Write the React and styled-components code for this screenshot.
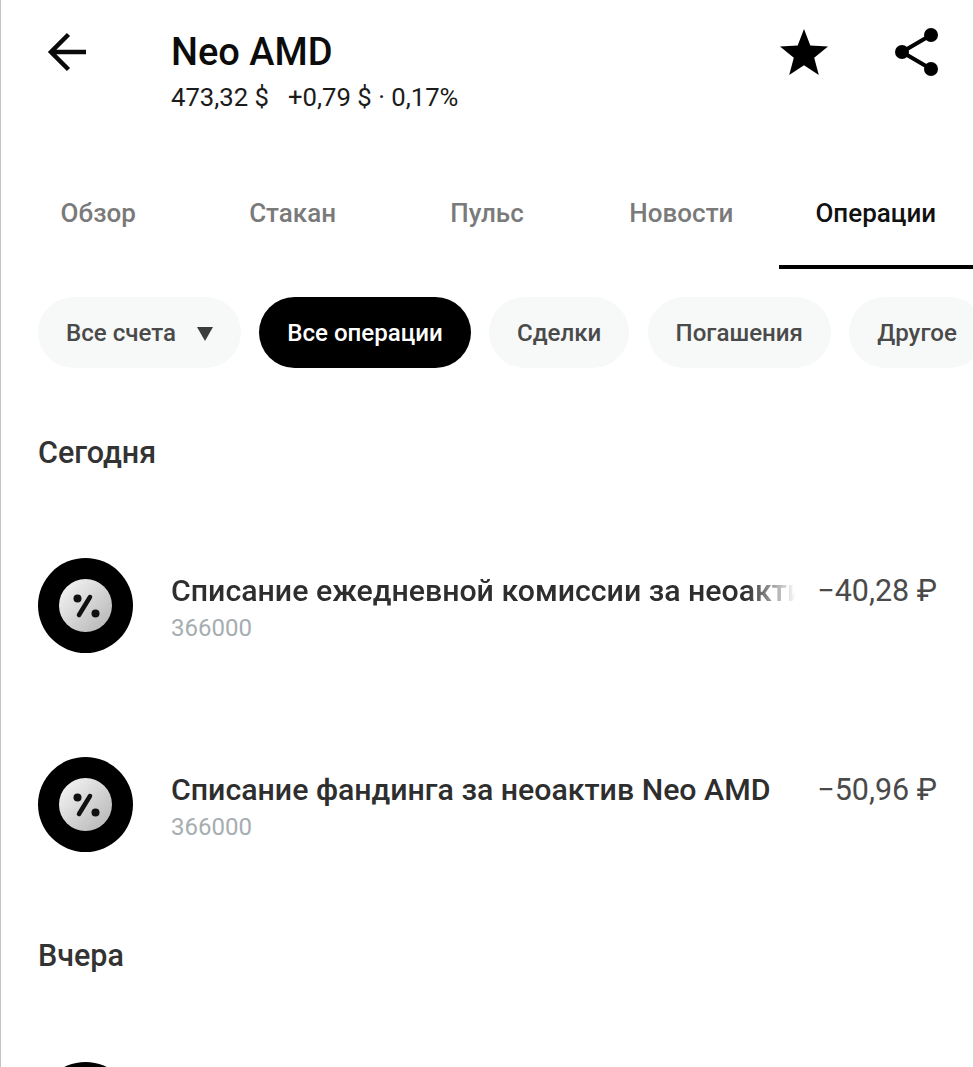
import React from "react";
import styled, { createGlobalStyle } from "styled-components";

const Global = createGlobalStyle`
  html, body { margin: 0; padding: 0; background: #fff; }
  body { font-family: Roboto, "Liberation Sans", sans-serif; }
`;

const Screen = styled.div`
  width: 974px;
  height: 1067px;
  box-sizing: border-box;
  overflow: hidden;
  background: #fff;
  border-left: 1px solid #c4c4c4;
  border-right: 1px solid #d4d4d4;
`;

const Header = styled.header`
  display: flex;
  align-items: flex-start;
  height: 179px;
  padding: 25px 34px 0 46px;
  box-sizing: border-box;
`;

const IconButton = styled.button`
  border: 0;
  padding: 0;
  background: none;
  display: flex;
  width: ${(p) => p.$w}px;
  height: 54px;
  margin-left: ${(p) => p.$ml || 0}px;
  align-items: center;
  justify-content: center;
`;

const TitleBlock = styled.div`
  flex: 1;
  margin-left: 84px;
`;

const Title = styled.h1`
  margin: 0;
  font-size: 38px;
  line-height: 54px;
  font-weight: 500;
  color: #0c0c0c;
`;

const Quote = styled.div`
  display: flex;
  gap: 19px;
  font-size: 25.7px;
  line-height: 37px;
  color: #1c1c1c;
`;

const Tabs = styled.nav`
  display: grid;
  grid-template-columns: repeat(5, 1fr);
  height: 90px;
`;

const Tab = styled.div`
  display: flex;
  align-items: center;
  justify-content: center;
  padding-bottom: 18px;
  box-sizing: border-box;
  font-size: 26px;
  font-weight: 500;
  color: ${(p) => (p.$active ? "#111" : "#7a7a7a")};
  border-bottom: 4px solid ${(p) => (p.$active ? "#000" : "transparent")};
`;

const Chips = styled.div`
  display: flex;
  gap: 18.2px;
  padding: 28px 0 0 37px;
  white-space: nowrap;
`;

const Chip = styled.div`
  display: flex;
  align-items: center;
  gap: 21px;
  flex-shrink: 0;
  height: 71px;
  padding: 0 28px;
  border-radius: 36px;
  font-size: 24.1px;
  font-weight: 500;
  background: ${(p) => (p.$active ? "#000" : "#f7f9f8")};
  color: ${(p) => (p.$active ? "#fff" : "#4a4a4a")};
`;

const Caret = styled.span`
  width: 0;
  height: 0;
  margin-top: 3px;
  border-left: 8px solid transparent;
  border-right: 8px solid transparent;
  border-top: 14px solid #3c3c3c;
`;

const SectionTitle = styled.h2`
  margin: ${(p) => p.$top}px 0 0 37px;
  font-size: 30.5px;
  line-height: 40px;
  font-weight: 500;
  color: #333;
`;

const Row = styled.div`
  display: flex;
  align-items: center;
  height: 95px;
  margin-top: ${(p) => p.$top}px;
  padding: 0 36px 0 37px;
`;

const Avatar = styled.div`
  width: 95px;
  height: 95px;
  flex-shrink: 0;
  border-radius: 50%;
  background: #000;
  display: flex;
  align-items: center;
  justify-content: center;
`;

const Coin = styled.div`
  width: 53px;
  height: 53px;
  border-radius: 50%;
  background: linear-gradient(135deg, #f2f2f2 10%, #b9b9b9 90%);
  display: flex;
  align-items: center;
  justify-content: center;
`;

const RowText = styled.div`
  width: 625px;
  margin-left: 38px;
  margin-top: 4px;
  flex-shrink: 0;
`;

const RowTitle = styled.div`
  font-size: 30.3px;
  line-height: 40px;
  font-weight: 500;
  color: #2e2e2e;
  white-space: nowrap;
  overflow: hidden;
  ${(p) =>
    p.$fade &&
    "-webkit-mask-image: linear-gradient(90deg, #000 92%, transparent 100%); mask-image: linear-gradient(90deg, #000 92%, transparent 100%);"}
`;

const RowSub = styled.div`
  font-size: 24px;
  line-height: 34px;
  color: #a6adb0;
`;

const Amount = styled.div`
  flex: 1;
  text-align: right;
  align-self: flex-start;
  margin-top: 13px;
  font-size: 30.5px;
  line-height: 40px;
  color: #4a4a4a;
  white-space: nowrap;
`;

const BackIcon = () => (
  <svg width="40" height="42" viewBox="0 0 40 42" fill="none" stroke="#0a0a0a" strokeWidth="4.500">
    <path d="M39 21H5M21.500 3.500L4 21l17.500 17.500" />
  </svg>
);

const StarIcon = () => (
  <svg width="48" height="46" viewBox="0 0 48 46" fill="#000">
    <path d="M24 0l6.300 16.400L48 17.500l-13.800 11.200L38.800 46 24 36.300 9.200 46l4.600-17.300L0 17.500l17.700-1.100z" />
  </svg>
);

const ShareIcon = () => (
  <svg width="44" height="48" viewBox="0 0 44 48">
    <path d="M7 24L36 7M7 24l29 17" stroke="#000" strokeWidth="4" fill="none" />
    <circle cx="7" cy="24" r="7" />
    <circle cx="36" cy="7" r="7" />
    <circle cx="36" cy="41" r="7" />
  </svg>
);

const PercentIcon = () => (
  <svg width="28" height="28" viewBox="0 0 28 28">
    <circle cx="5.500" cy="6.500" r="4" fill="#111" />
    <circle cx="23.500" cy="21.500" r="4" fill="#111" />
    <path d="M18 5L7 23" stroke="#111" strokeWidth="4.500" strokeLinecap="round" />
  </svg>
);

const tabs = ["Обзор", "Стакан", "Пульс", "Новости", "Операции"];
const filters = ["Все операции", "Сделки", "Погашения", "Другое"];

function Operation({ top, title, fade, amount }) {
  return (
    <Row $top={top}>
      <Avatar>
        <Coin>
          <PercentIcon />
        </Coin>
      </Avatar>
      {title && (
        <RowText>
          <RowTitle $fade={fade}>{title}</RowTitle>
          <RowSub>366000</RowSub>
        </RowText>
      )}
      {amount && <Amount>{amount}</Amount>}
    </Row>
  );
}

export default function App() {
  return (
    <Screen>
      <Global />
      <Header>
        <IconButton $w={40}>
          <BackIcon />
        </IconButton>
        <TitleBlock>
          <Title>Neo AMD</Title>
          <Quote>
            <span>473,32 $</span>
            <span>+0,79 $ · 0,17%</span>
          </Quote>
        </TitleBlock>
        <IconButton $w={48}>
          <StarIcon />
        </IconButton>
        <IconButton $w={44} $ml={67}>
          <ShareIcon />
        </IconButton>
      </Header>
      <Tabs>
        {tabs.map((t) => (
          <Tab key={t} $active={t === "Операции"}>
            {t}
          </Tab>
        ))}
      </Tabs>
      <Chips>
        <Chip>
          Все счета
          <Caret />
        </Chip>
        {filters.map((f) => (
          <Chip key={f} $active={f === "Все операции"}>
            {f}
          </Chip>
        ))}
      </Chips>
      <SectionTitle $top={65}>Сегодня</SectionTitle>
      <Operation top={85} fade title="Списание ежедневной комиссии за неоакти" amount="−40,28 ₽" />
      <Operation top={104} title="Списание фандинга за неоактив Neo AMD" amount="−50,96 ₽" />
      <SectionTitle $top={84}>Вчера</SectionTitle>
      <Operation top={86} />
    </Screen>
  );
}
